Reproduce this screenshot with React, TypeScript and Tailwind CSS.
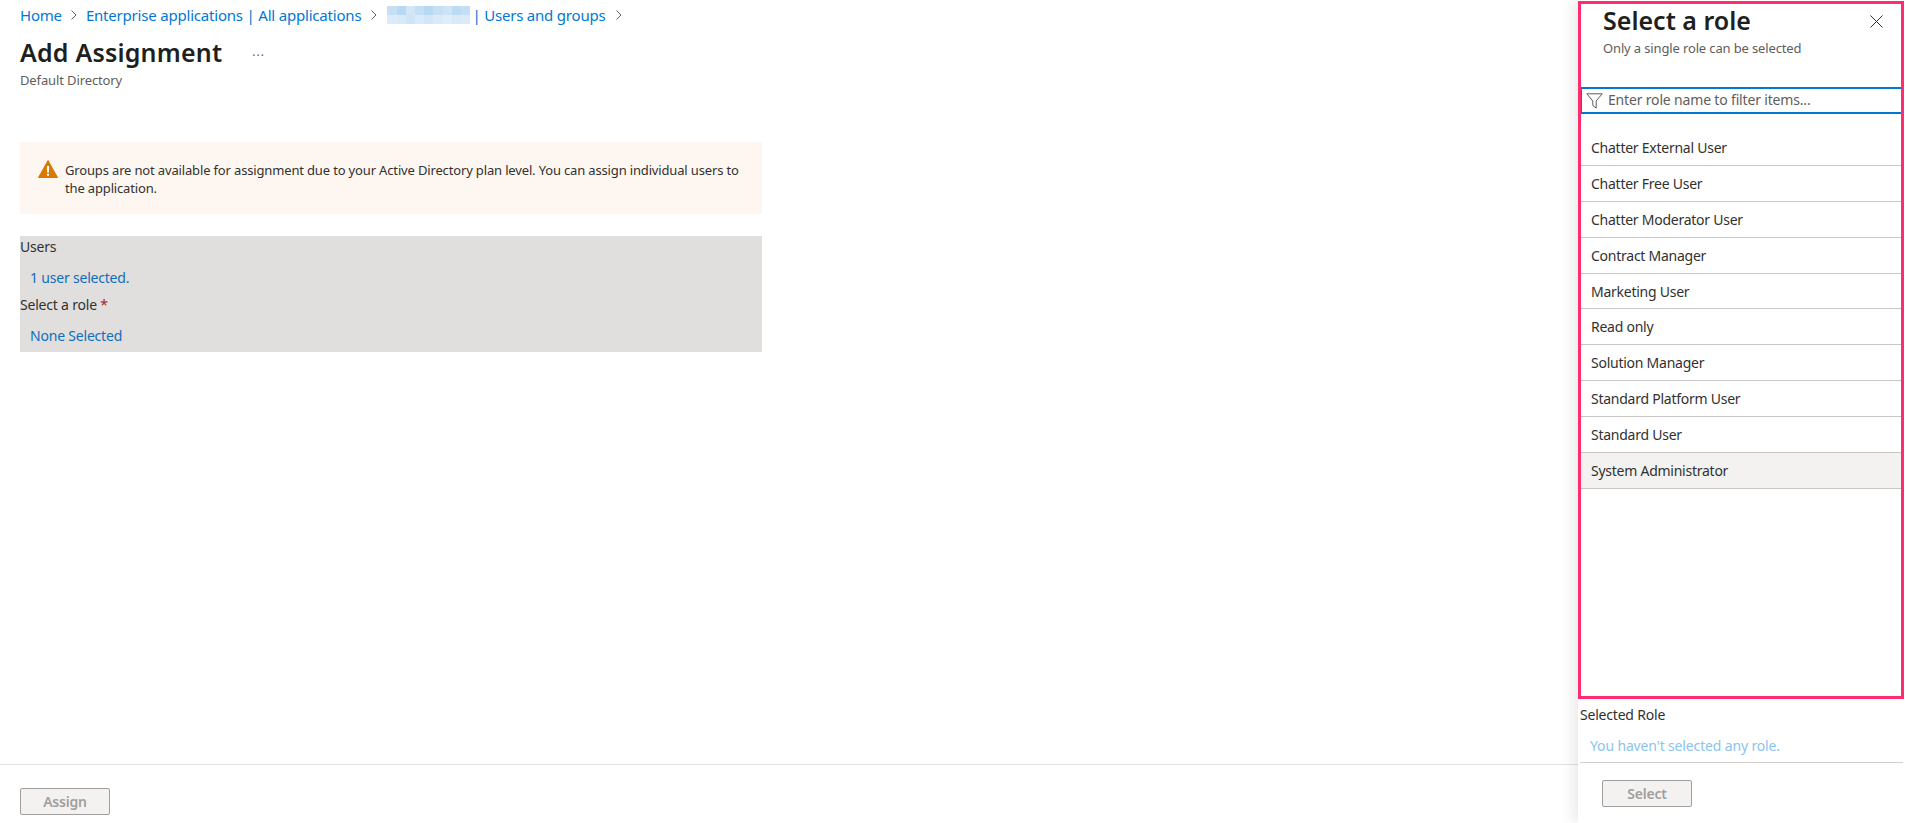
import React from "react";

const roles = [
  "Chatter External User",
  "Chatter Free User",
  "Chatter Moderator User",
  "Contract Manager",
  "Marketing User",
  "Read only",
  "Solution Manager",
  "Standard Platform User",
  "Standard User",
  "System Administrator",
];

const blurTop = ["#c5dff5", "#b9d8f3", "#d3e6f7", "#c3def5", "#b8d9f3", "#c5dff5", "#cde3f6", "#bedbf4", "#c3def5"];
const blurBottom = ["#dcebf9", "#d8e9f8", "#cfe4f7", "#d9eaf8", "#d3e6f7", "#d9eaf8", "#dfedf9", "#d8e9f8", "#dcebf9"];

function Chevron() {
  return (
    <svg width="8" height="12" viewBox="0 0 8 12" className="shrink-0">
      <path d="M1.5 1.5 L6 6 L1.5 10.5" fill="none" stroke="#605e5c" strokeWidth="1" />
    </svg>
  );
}

export default function App() {
  return (
    <div className="flex h-[823px] w-[1905px] overflow-hidden bg-white font-['Noto_Sans',sans-serif] text-[#201f1e]">
      <div className="flex w-[1578px] shrink-0 flex-col">
        <div className="flex-1 pl-5">
          <nav className="flex h-[30px] items-center text-[15px] tracking-[-0.2px] text-[#0078d4]">
            <span>Home</span>
            <span className="mx-[8px]"><Chevron /></span>
            <span>Enterprise applications | All applications</span>
            <span className="mx-[9px]"><Chevron /></span>
            <span className="flex h-[18px] w-[83px] flex-col blur-[0.6px]">
              <span className="flex flex-1">
                {blurTop.map((c, i) => (
                  <span key={i} className="flex-1" style={{ backgroundColor: c }} />
                ))}
              </span>
              <span className="flex flex-1">
                {blurBottom.map((c, i) => (
                  <span key={i} className="flex-1" style={{ backgroundColor: c }} />
                ))}
              </span>
            </span>
            <span className="ml-[2px]">| Users and groups</span>
            <span className="ml-[9px]"><Chevron /></span>
          </nav>
          <div className="mt-[4px] flex h-[36px] items-center">
            <h1 className="text-[25px] font-semibold leading-none tracking-[0.2px]">Add Assignment</h1>
            <span className="ml-[30px] text-[12px] leading-none tracking-[1px] text-[#605e5c]">...</span>
          </div>
          <div className="mt-[2px] text-[13px] leading-[16px] tracking-[-0.12px] text-[#605e5c]">Default Directory</div>
          <div className="mt-[54px] flex h-[72px] w-[742px] gap-[7px] bg-[#fef7f1] px-[18px] py-[19px]">
            <svg width="20" height="18" viewBox="0 0 20 18" className="mt-[-1px] shrink-0">
              <path d="M10 0.5 L19.5 17.5 L0.5 17.5 Z" fill="#d97a00" stroke="#d97a00" strokeLinejoin="round" />
              <rect x="9" y="6" width="2" height="6.5" fill="#fff" />
              <rect x="9" y="13.7" width="2" height="2" fill="#fff" />
            </svg>
            <p className="text-[13px] leading-[18px] tracking-[-0.155px] text-[#323130]">
              Groups are not available for assignment due to your Active Directory plan level. You can assign individual users to the application.
            </p>
          </div>
          <div className="mt-[22px] h-[116px] w-[742px] bg-[#e0dfdd] text-[14px] tracking-[-0.2px] text-[#323130]">
            <div className="h-[23px] leading-[22px]">Users</div>
            <div className="mt-[8px] h-[23px] pl-[10px] leading-[22px] text-[#106ebe]">1 user selected.</div>
            <div className="mt-[4px] h-[23px] leading-[22px]">
              Select a role <span className="text-[#a4262c]">*</span>
            </div>
            <div className="mt-[8px] h-[23px] pl-[10px] leading-[22px] text-[#106ebe]">None Selected</div>
          </div>
        </div>
        <div className="h-[59px] border-t border-[#e1dfdd] pl-5 pt-[23px]">
          <button className="h-[27px] w-[90px] rounded-[2px] border border-[#a19f9d] bg-[#f3f2f1] text-[14px] font-semibold leading-none tracking-[-0.2px] text-[#a19f9d]">
            Assign
          </button>
        </div>
      </div>

      <div className="flex w-[327px] shrink-0 flex-col shadow-[-6px_0_12px_rgba(0,0,0,0.08)]">
        <div className="mr-px mt-px flex h-[698px] flex-col border-[3px] border-[#ff2d6f]">
          <div className="relative h-[83px] pl-[22px]">
            <h2 className="-mt-px text-[25px] font-semibold leading-[34px]">Select a role</h2>
            <p className="mt-[3px] text-[13px] leading-[16px] tracking-[-0.14px] text-[#605e5c]">Only a single role can be selected</p>
            <svg width="13" height="13" viewBox="0 0 13 13" className="absolute right-[18px] top-[11px]">
              <path d="M0.5 0.5 L12.5 12.5 M12.5 0.5 L0.5 12.5" stroke="#323130" strokeWidth="1" fill="none" />
            </svg>
          </div>
          <div className="flex h-[27px] items-center gap-[5px] border-y-2 border-l border-[#0078d4] pb-[2px] pl-[4px] text-[14px] tracking-[-0.17px] text-[#605e5c]">
            <svg width="17" height="16" viewBox="0 0 17 16" className="mt-[2px] shrink-0">
              <path d="M0.8 0.8 H16.2 L10.2 8 V15 L6.8 12.5 V8 Z" fill="none" stroke="#605e5c" strokeWidth="1" />
            </svg>
            <span>Enter role name to filter items...</span>
          </div>
          <ul className="mt-[16px] text-[14px] tracking-[-0.25px] text-[#323130]">
            {roles.map((r, i) => (
              <li
                key={r}
                className={`flex h-[35.9px] items-center border-b border-[#c8c6c4] pl-[10px] ${i === 9 ? "bg-[#f3f2f1]" : ""}`}
              >
                {r}
              </li>
            ))}
          </ul>
        </div>
        <div className="ml-[2px] flex-1">
          <div className="mt-[5px] h-[22px] text-[14px] leading-[22px] tracking-[-0.2px] text-[#323130]">Selected Role</div>
          <div className="mt-[9px] h-[23px] pl-[10px] text-[14px] leading-[22px] tracking-[-0.15px] text-[#8cc3ee]">You haven't selected any role.</div>
          <div className="mr-[2px] mt-[4px] border-t border-[#d2d0ce]" />
          <button className="ml-[22px] mt-[17px] h-[27px] w-[90px] rounded-[2px] border border-[#a19f9d] bg-[#f3f2f1] text-[14px] font-semibold leading-none tracking-[-0.2px] text-[#a19f9d]">
            Select
          </button>
        </div>
      </div>
    </div>
  );
}
